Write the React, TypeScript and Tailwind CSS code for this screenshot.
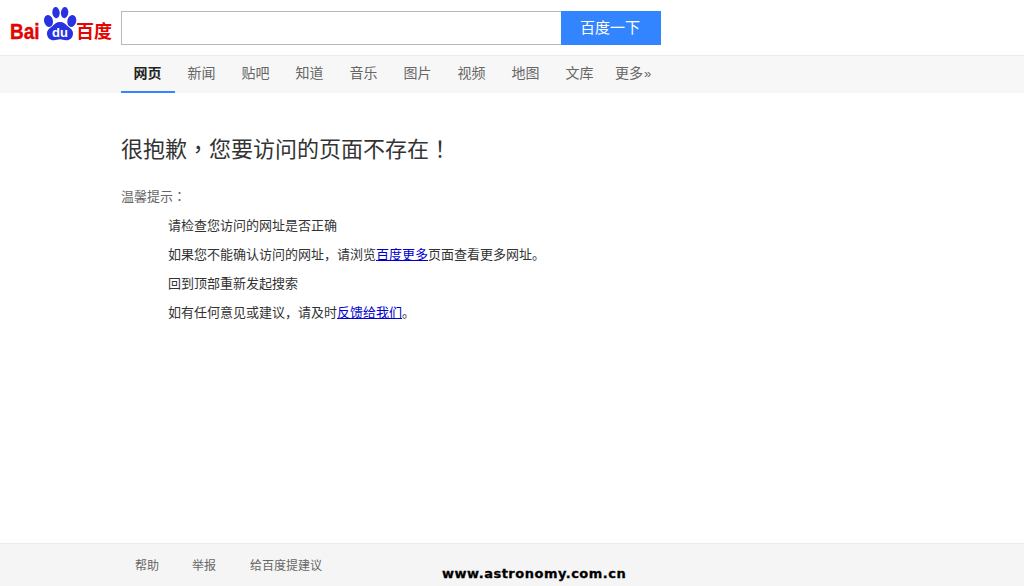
const CJK = "font-['Liberation_Sans','Noto_Sans_CJK_SC',sans-serif]";
const TC = "font-['Noto_Sans_CJK_TC',sans-serif]";

function Logo() {
  return (
    <svg width="104" height="42" viewBox="0 0 104 42" className="shrink-0" aria-label="Baidu">
      <g fill="#2932e1">
        <ellipse cx="39.5" cy="15" rx="4.4" ry="6" transform="rotate(-15 39.5 15)" />
        <ellipse cx="47" cy="6.6" rx="3.7" ry="5.6" transform="rotate(-6 47 6.6)" />
        <ellipse cx="55.6" cy="6.6" rx="3.7" ry="5.6" transform="rotate(6 55.6 6.6)" />
        <ellipse cx="62.8" cy="15" rx="4.4" ry="6" transform="rotate(15 62.8 15)" />
        <path d="M51 16c3.6 0 5.4 2 7.4 4 2.4 2.2 5.6 3.6 5.6 7.4 0 4.2-3 6.8-6.8 6.8-2.6 0-4.2-1-6.2-1s-3.6 1-6.2 1c-3.8 0-6.8-2.6-6.8-6.8 0-3.8 3.2-5.2 5.6-7.4 2-2 3.8-4 7.4-4z" />
      </g>
      <text x="1" y="33" fill="#e10601" stroke="#e10601" strokeWidth="0.4" fontFamily="'Liberation Sans',sans-serif" fontWeight="700" fontSize="22.5" textLength="29.5" lengthAdjust="spacingAndGlyphs">Bai</text>
      <text x="51" y="30.5" fill="#fff" fontFamily="'Liberation Sans',sans-serif" fontWeight="700" fontSize="13" textAnchor="middle">du</text>
      <text x="67" y="32" fill="#e10601" fontFamily="'Noto Sans CJK SC',sans-serif" fontWeight="700" fontSize="18" textLength="36">百度</text>
    </svg>
  );
}

const tabs = ["网页", "新闻", "贴吧", "知道", "音乐", "图片", "视频", "地图", "文库"];

export default function App() {
  return (
    <div className={`relative flex h-[586px] w-[1024px] flex-col overflow-hidden bg-white ${CJK}`}>
      <header className="flex h-[56px] shrink-0 items-start border-b border-[#ebebeb]">
        <div className="flex w-[121px] shrink-0 justify-end pr-[8px] pt-[6px]">
          <Logo />
        </div>
        <div className="mt-[11px] flex h-[34px]">
          <div className="h-[34px] w-[440px] border border-r-0 border-[#b8b8b8] bg-white" />
          <div className="flex h-[34px] w-[100px] items-center justify-center pr-[2px] bg-[#3385ff] text-[15px] text-white">百度一下</div>
        </div>
      </header>

      <nav className="flex h-[37px] shrink-0 bg-[#f7f7f7] pl-[121px] text-[14px] text-[#666666]">
        {tabs.map((t, i) => (
          <span
            key={t}
            className={
              i === 0
                ? "flex h-[37px] w-[54px] items-center justify-center border-b-2 border-[#3385ff] pr-[1px] font-bold text-[#222222]"
                : "flex h-[37px] w-[54px] items-center justify-center border-b-2 border-transparent pr-[1px]"
            }
          >
            {t}
          </span>
        ))}
        <span className="ml-[8px] flex h-[37px] items-center pb-[2px]">
          更多<span className="ml-[1px] font-['Liberation_Sans'] text-[13px]">»</span>
        </span>
      </nav>

      <main className="flex-1 pl-[121px]">
        <h1 className="mt-[39px] text-[22px] leading-[30px] font-normal text-[#333333]">
          很抱歉<span className={TC}>，</span>您要访问的页面不存在<span className={TC}>！</span>
        </h1>
        <p className="mt-[21px] text-[13px] leading-[20px] text-[#666666]">
          温馨提示<span className={TC}>：</span>
        </p>
        <ul className="mt-[4px] flex flex-col pl-[47px] text-[13px] leading-[29px] text-[#333333]">
          <li>请检查您访问的网址是否正确</li>
          <li>
            如果您不能确认访问的网址，请浏览<a href="#" className="text-[#0000cc] underline">百度更多</a>页面查看更多网址。
          </li>
          <li>回到顶部重新发起搜索</li>
          <li>
            如有任何意见或建议，请及时<a href="#" className="text-[#0000cc] underline">反馈给我们</a>。
          </li>
        </ul>
      </main>

      <footer className="flex h-[43px] shrink-0 items-start border-t border-[#ebebeb] bg-[#f5f5f5] pl-[135px] pt-[13px] text-[12px] leading-[18px] text-[#666666]">
        <span className="w-[57px]">帮助</span>
        <span className="w-[58px]">举报</span>
        <span>给百度提建议</span>
      </footer>

      <div className="absolute left-[442px] top-[566px] font-['DejaVu_Sans'] text-[13px] leading-[16px] font-bold tracking-[0.5px] text-black [-webkit-text-stroke:0.3px_black]">
        www.astronomy.com.cn
      </div>
    </div>
  );
}
